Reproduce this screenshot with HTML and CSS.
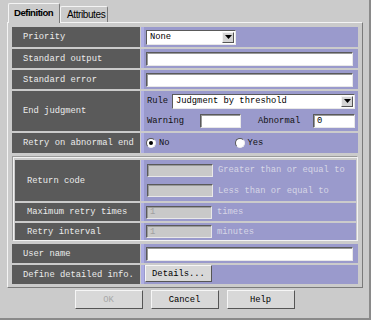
FILE: index.html
```html
<!DOCTYPE html>
<html>
<head>
<meta charset="utf-8">
<link rel="stylesheet" href="styles.css">
</head>
<body>
<div class="dialog">
  <div class="tabs">
    <div class="tab active">Definition</div>
    <div class="tab">Attributes</div>
  </div>
  <div class="panel">
    <div class="row h20">
      <div class="label">Priority</div>
      <div class="value">
        <div class="select w90"><span class="sel-text">None</span><span class="sel-btn"><svg width="7" height="4" viewBox="0 0 7 4"><path d="M0 0H7L3.5 4Z" fill="#000"/></svg></span></div>
      </div>
    </div>
    <div class="row h19">
      <div class="label">Standard output</div>
      <div class="value"><div class="field full"></div></div>
    </div>
    <div class="row h19">
      <div class="label">Standard error</div>
      <div class="value"><div class="field full"></div></div>
    </div>
    <div class="row h40">
      <div class="label">End judgment</div>
      <div class="value stack">
        <div class="line">
          <span class="txt rule">Rule</span>
          <div class="select grow"><span class="sel-text">Judgment by threshold</span><span class="sel-btn"><svg width="7" height="4" viewBox="0 0 7 4"><path d="M0 0H7L3.5 4Z" fill="#000"/></svg></span></div>
        </div>
        <div class="line">
          <span class="txt warn">Warning</span>
          <div class="field w41"></div>
          <span class="txt abn">Abnormal</span>
          <div class="field w42"><span class="ftxt">0</span></div>
        </div>
      </div>
    </div>
    <div class="row h20">
      <div class="label">Retry on abnormal end</div>
      <div class="value">
        <span class="radio checked"></span><span class="txt rtxt">No</span>
        <span class="radio yes"></span><span class="txt rtxt">Yes</span>
      </div>
    </div>
    <div class="group">
      <div class="row h41">
        <div class="label glabel">Return code</div>
        <div class="value stack gstack">
          <div class="line"><div class="field dis w65"></div><span class="dtxt">Greater than or equal to</span></div>
          <div class="line"><div class="field dis w65"></div><span class="dtxt">Less than or equal to</span></div>
        </div>
      </div>
      <div class="row h18">
        <div class="label glabel">Maximum retry times</div>
        <div class="value"><div class="field dis w65"><span class="ftxt grey">1</span></div><span class="dtxt">times</span></div>
      </div>
      <div class="row h17">
        <div class="label glabel">Retry interval</div>
        <div class="value"><div class="field dis w65"><span class="ftxt grey">1</span></div><span class="dtxt">minutes</span></div>
      </div>
    </div>
    <div class="row h19">
      <div class="label">User name</div>
      <div class="value"><div class="field full"></div></div>
    </div>
    <div class="row h19">
      <div class="label">Define detailed info.</div>
      <div class="value vtop"><div class="btn details">Details...</div></div>
    </div>
  </div>
  <div class="buttons">
    <div class="btn big disabled">OK</div>
    <div class="btn big">Cancel</div>
    <div class="btn big">Help</div>
  </div>
</div>
</body>
</html>
```

FILE: styles.css
```css
html, body {
  margin: 0;
  padding: 0;
  background: #cbcbcb;
}
.dialog {
  width: 371px;
  height: 320px;
  box-sizing: border-box;
  padding: 3px 0 0 7px;
  background: #cbcbcb;
  border-right: 2px solid #8a8a8a;
  border-bottom: 2px solid #8a8a8a;
  font-family: "Liberation Mono", monospace;
  font-size: 8.8px;
}
.tabs {
  display: flex;
  align-items: flex-end;
  height: 19px;
  padding-left: 1px;
}
.tab {
  font-family: "Liberation Sans", Arial, sans-serif;
  font-size: 10px;
  letter-spacing: -0.4px;
  color: #000;
  box-sizing: border-box;
  height: 16px;
  width: 48px;
  padding: 2px 0 0 6px;
  border-top: 1px solid #f4f4f4;
  border-left: 1px solid #f4f4f4;
  border-right: 1px solid #7a7a7a;
  border-radius: 2px 2px 0 0;
  white-space: nowrap;
}
.tab.active {
  font-weight: bold;
  font-size: 9.6px;
  letter-spacing: -0.5px;
  height: 20px;
  width: 52px;
  padding: 3px 0 0 5px;
  position: relative;
  margin-bottom: -1px;
  background: #cbcbcb;
  z-index: 1;
}
.panel {
  width: 356px;
  height: 266px;
  box-sizing: border-box;
  border-top: 1px solid #f4f4f4;
  border-left: 1px solid #f4f4f4;
  border-right: 1px solid #7a7a7a;
  border-bottom: 1px solid #7a7a7a;
  padding: 4px 4px 0 4px;
  display: flex;
  flex-direction: column;
  gap: 2px;
}
.row {
  display: flex;
  flex: none;
}
.h17 { height: 17px; }
.h18 { height: 18px; }
.h19 { height: 19px; }
.h20 { height: 20px; }
.h40 { height: 40px; }
.h41 { height: 41px; }
.label {
  width: 128px;
  flex: none;
  background: #5a5a5a;
  color: #ececec;
  display: flex;
  align-items: center;
  padding-left: 11px;
  box-sizing: border-box;
  white-space: nowrap;
}
.value {
  flex: 1;
  background: #9a9acc;
  border-left: 3px solid #aeaee4;
  margin-left: 1px;
  display: flex;
  align-items: center;
  padding-left: 2px;
  padding-right: 5px;
  white-space: nowrap;
}
.value.vtop { align-items: flex-start; padding-left: 1px; }
.value.stack {
  flex-direction: column;
  align-items: stretch;
  justify-content: space-around;
  padding-left: 3px;
  padding-right: 3px;
}
.line {
  display: flex;
  align-items: center;
}
.txt { color: #111; }
.rule { width: 25px; }
.warn { width: 53px; }
.abn { margin-left: 17px; width: 55px; }
.rtxt { margin-left: 3px; }
.field {
  height: 14px;
  box-sizing: border-box;
  background: #fff;
  border-top: 1px solid #5a5a5a;
  border-left: 1px solid #5a5a5a;
  border-right: 1px solid #e8e8e8;
  border-bottom: 1px solid #e8e8e8;
  box-shadow: inset 1px 1px 0 #9a9a9a;
  display: flex;
  align-items: center;
}
.field.full { flex: 1; }
.w41 { width: 41px; }
.w42 { width: 42px; }
.w65 { width: 66px; }
.field.dis {
  background: #c9c9c9;
  height: 13px;
}
.ftxt { padding-left: 3px; color: #000; }
.ftxt.grey { color: #a0a0a0; }
.dtxt {
  color: #d6d6e6;
  margin-left: 5px;
}
.select {
  height: 15px;
  box-sizing: border-box;
  background: #fff;
  border-top: 1px solid #5a5a5a;
  border-left: 1px solid #5a5a5a;
  border-right: 1px solid #e8e8e8;
  border-bottom: 1px solid #e8e8e8;
  display: flex;
  align-items: center;
  justify-content: space-between;
}
.w90 { width: 90px; }
.select.grow { flex: 1; }
.sel-text { padding-left: 3px; color: #000; }
.sel-btn {
  width: 12px;
  height: 11px;
  margin-right: 1px;
  box-sizing: border-box;
  background: #d4d4d4;
  border-top: 1px solid #f4f4f4;
  border-left: 1px solid #f4f4f4;
  border-right: 1px solid #555;
  border-bottom: 1px solid #555;
  display: flex;
  align-items: center;
  justify-content: center;
}
.radio {
  width: 10px;
  height: 10px;
  box-sizing: border-box;
  border-radius: 50%;
  background: #fff;
  border: 1px solid;
  border-color: #555 #eee #eee #555;
  display: inline-flex;
  align-items: center;
  justify-content: center;
}
.radio.checked::after {
  content: "";
  width: 4px;
  height: 4px;
  border-radius: 50%;
  background: #000;
}
.radio.yes { margin-left: 65px; }
.group {
  flex: none;
  height: 85px;
  box-sizing: border-box;
  border-top: 1px solid #9a9a9a;
  border-left: 1px solid #9a9a9a;
  border-right: 1px solid #f2f2f2;
  border-bottom: 1px solid #f2f2f2;
  box-shadow: inset 1px 1px 0 #f2f2f2;
  padding: 3px 1px 1px 2px;
  margin: 1px 0;
  display: flex;
  flex-direction: column;
  gap: 2px;
}
.glabel { width: 125px; padding-left: 12px; }
.gstack { justify-content: space-evenly; padding-left: 3px; }
.gstack .dtxt { margin-left: 5px; }
.btn {
  box-sizing: border-box;
  background: #d8d8d8;
  border-top: 1px solid #f6f6f6;
  border-left: 1px solid #f6f6f6;
  border-right: 1px solid #555;
  border-bottom: 1px solid #555;
  color: #000;
  display: flex;
  align-items: center;
  justify-content: center;
}
.details {
  width: 67px;
  height: 17px;
  margin-top: 0;
}
.buttons {
  display: flex;
  justify-content: center;
  gap: 8px;
  margin-top: 2px;
  margin-left: -7px;
}
.btn.big {
  width: 68px;
  height: 19px;
}
.btn.disabled { color: #a8a8a8; }
```
